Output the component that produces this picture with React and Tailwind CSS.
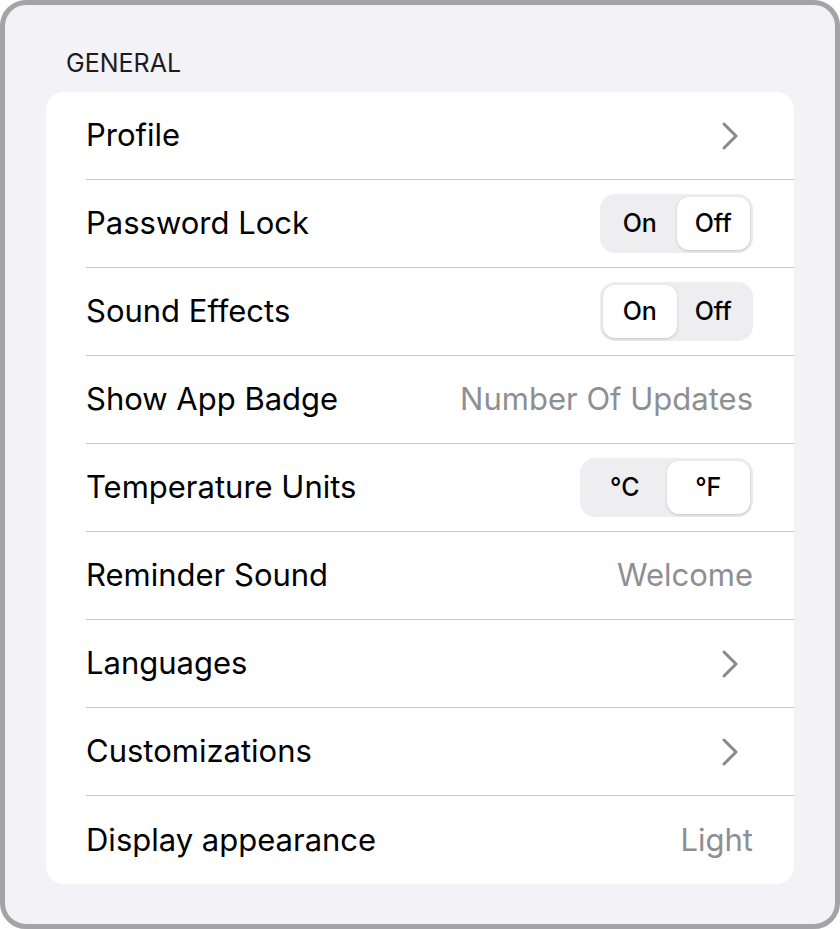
const font = { fontFamily: 'Inter, "Noto Sans", sans-serif' }

function Chevron() {
  return (
    <svg width="18" height="30" viewBox="0 0 18 30" fill="none" className="mr-[14px]">
      <path d="M3 3 L15 15 L3 27" stroke="#8a8a8e" strokeWidth="3" strokeLinecap="round" strokeLinejoin="round" />
    </svg>
  )
}

function Segmented({ options, selected, width }) {
  return (
    <div className={`flex h-[59px] rounded-[15px] bg-[#eeeef0] p-[3px] ${width}`}>
      {options.map((o, i) => (
        <div
          key={o}
          className={`flex flex-1 items-center justify-center rounded-[12px] text-[25px] font-medium text-black ${
            i === selected ? 'bg-white shadow-[0_1px_3px_rgba(0,0,0,0.18)]' : ''
          }`}
        >
          {o}
        </div>
      ))}
    </div>
  )
}

const rows = [
  { label: 'Profile', kind: 'chevron' },
  { label: 'Password Lock', kind: 'seg', options: ['On', 'Off'], selected: 1, width: 'w-[153px]' },
  { label: 'Sound Effects', kind: 'seg', options: ['On', 'Off'], selected: 0, width: 'w-[153px]' },
  { label: 'Show App Badge', kind: 'value', value: 'Number Of Updates' },
  { label: 'Temperature Units', kind: 'seg', options: ['°C', '°F'], selected: 1, width: 'w-[173px]' },
  { label: 'Reminder Sound', kind: 'value', value: 'Welcome' },
  { label: 'Languages', kind: 'chevron' },
  { label: 'Customizations', kind: 'chevron' },
  { label: 'Display appearance', kind: 'value', value: 'Light' },
]

export default function App() {
  return (
    <div style={font} className="h-[929px] w-[840px] rounded-[26px] border-[5px] border-[#a4a4a6] bg-[#f2f2f7]">
      <div className="pl-[61px] pt-[44px] pb-[14px] text-[25px] leading-[29px] text-[#1c1c1e]">GENERAL</div>
      <div className="ml-[41px] mr-[41px] rounded-[18px] bg-white">
        {rows.map((r, i) => (
          <div key={r.label} className="pl-[40px]">
            <div
              className={`flex h-[88px] items-center justify-between pr-[41px] ${
                i < rows.length - 1 ? 'border-b border-[#c6c6c8]' : ''
              }`}
            >
              <span className="text-[31px] text-black">{r.label}</span>
              {r.kind === 'chevron' && <Chevron />}
              {r.kind === 'value' && <span className="text-[31px] text-[#8e8e93]">{r.value}</span>}
              {r.kind === 'seg' && <Segmented options={r.options} selected={r.selected} width={r.width} />}
            </div>
          </div>
        ))}
      </div>
    </div>
  )
}
